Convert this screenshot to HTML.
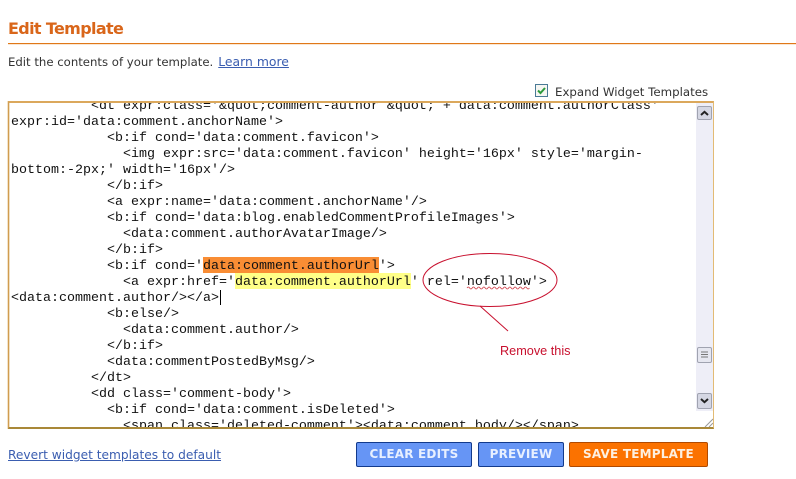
<!DOCTYPE html>
<html><head><meta charset="utf-8">
<style>
html,body{margin:0;padding:0;background:#fff;}
body{width:796px;height:479px;position:relative;overflow:hidden;font-family:"DejaVu Sans","Liberation Sans",sans-serif;}
.abs{position:absolute;white-space:nowrap;}
#ta{position:absolute;left:8px;top:101px;width:704px;height:324px;border-style:solid;border-width:2px 1px 2px 1px;border-color:#dba85c #e3bb74 #a98838 #d09c50;overflow:hidden;background:#fff;box-shadow:1px 0 0 #f0e0c4 inset,-1px 0 0 #f3e3c8;}
.l{position:absolute;left:2px;white-space:pre;font:13.33px/16px "Liberation Mono",monospace;color:#111;height:16px;}
.h{position:absolute;width:176px;height:16px;}
.btn{position:absolute;top:442px;height:23px;border:1px solid #123a8c;border-radius:2px;background:#6695f5;color:#e8f0ff;font:bold 12px/23px "DejaVu Sans",sans-serif;text-align:center;letter-spacing:.2px;}
a{color:#3a5db0;text-decoration:underline;}
</style></head><body>
<div class="abs" style="left:8px;top:19px;font:bold 16px/20px 'DejaVu Sans',sans-serif;color:#d9661a;letter-spacing:-.65px">Edit Template</div>
<div class="abs" style="left:8px;top:43px;width:788px;height:1px;background:#e07818"></div>
<div class="abs" style="left:8px;top:44px;width:788px;height:1px;background:#fae6d2"></div>
<div class="abs" style="left:8px;top:54px;font-size:11.7px;line-height:16px;color:#333">Edit the contents of your template.<a href="#" style="font-size:12.4px;margin-left:5px">Learn more</a></div>
<svg class="abs" style="left:535px;top:84px" width="14" height="14"><rect x=".5" y=".5" width="12" height="12" fill="#f6f6f2" stroke="#4a7a96"/><path d="M3 6.5l2.5 2.5 4.5-5" fill="none" stroke="#2d9a3c" stroke-width="2"/></svg>
<div class="abs" style="left:555px;top:84px;font-size:11.8px;line-height:16px;color:#333">Expand Widget Templates</div>
<div id="ta">
<div class="h" style="left:194px;top:154px;background:#f98d34"></div>
<div class="h" style="left:226px;top:170px;background:#ffff88"></div>
<div class="l" style="top:-4px">          &lt;dt expr:class='&amp;quot;comment-author &amp;quot; + data:comment.authorClass'</div>
<div class="l" style="top:12px">expr:id='data:comment.anchorName'&gt;</div>
<div class="l" style="top:28px">            &lt;b:if cond='data:comment.favicon'&gt;</div>
<div class="l" style="top:44px">              &lt;img expr:src='data:comment.favicon' height='16px' style='margin-</div>
<div class="l" style="top:60px">bottom:-2px;' width='16px'/&gt;</div>
<div class="l" style="top:76px">            &lt;/b:if&gt;</div>
<div class="l" style="top:92px">            &lt;a expr:name='data:comment.anchorName'/&gt;</div>
<div class="l" style="top:108px">            &lt;b:if cond='data:blog.enabledCommentProfileImages'&gt;</div>
<div class="l" style="top:124px">              &lt;data:comment.authorAvatarImage/&gt;</div>
<div class="l" style="top:140px">            &lt;/b:if&gt;</div>
<div class="l" style="top:156px">            &lt;b:if cond='data:comment.authorUrl'&gt;</div>
<div class="l" style="top:172px">              &lt;a expr:href='data:comment.authorUrl' rel='nofollow'&gt;</div>
<div class="l" style="top:188px">&lt;data:comment.author/&gt;&lt;/a&gt;</div>
<div class="l" style="top:204px">            &lt;b:else/&gt;</div>
<div class="l" style="top:220px">              &lt;data:comment.author/&gt;</div>
<div class="l" style="top:236px">            &lt;/b:if&gt;</div>
<div class="l" style="top:252px">            &lt;data:commentPostedByMsg/&gt;</div>
<div class="l" style="top:268px">          &lt;/dt&gt;</div>
<div class="l" style="top:284px">          &lt;dd class='comment-body'&gt;</div>
<div class="l" style="top:300px">            &lt;b:if cond='data:comment.isDeleted'&gt;</div>
<div class="l" style="top:316px">              &lt;span class='deleted-comment'&gt;&lt;data:comment.body/&gt;&lt;/span&gt;</div>
<div style="position:absolute;left:211px;top:187px;width:1px;height:15px;background:#000"></div>
<svg style="position:absolute;left:687px;top:0" width="17" height="324">
<rect x="0" y="0" width="17" height="308" fill="#eeeef7"/>
<rect x="1.5" y="3.5" width="14" height="13" rx="1.5" fill="#d5d7e3" stroke="#a0a3b0"/>
<path d="M5 12l3.5-3.2 3.5 3.2" fill="none" stroke="#222" stroke-width="2"/>
<rect x="1.5" y="244.5" width="14" height="15" rx="1.5" fill="#e6e7f0" stroke="#a0a3b0"/>
<path d="M5 249h7M5 251.5h7M5 254h7" stroke="#777" fill="none"/>
<rect x="1.5" y="290.5" width="14" height="15" rx="1.5" fill="#d5d7e3" stroke="#a0a3b0"/>
<path d="M5 296l3.5 3.2 3.5-3.2" fill="none" stroke="#222" stroke-width="2"/>
<path d="M9 324l8-8M13 324l4-4" stroke="#999" fill="none"/>
</svg>
</div>
<svg class="abs" style="left:0;top:0" width="796" height="479">
<ellipse cx="490" cy="280" rx="67" ry="26.5" fill="none" stroke="#c8102e" stroke-width="1"/>
<path d="M480 306L508 331" stroke="#c8102e" fill="none"/>
<path d="M467 288q1.3-2 2.6 0t2.6 0 2.6 0 2.6 0 2.6 0 2.6 0 2.6 0 2.6 0 2.6 0 2.6 0 2.6 0 2.6 0 2.6 0 2.6 0 2.6 0 2.6 0 2.6 0 2.6 0 2.6 0 2.6 0 2.6 0 2.6 0 2.6 0 2.6 0" stroke="#d0404a" fill="none" stroke-width=".8"/>
</svg>
<div class="abs" style="left:500px;top:344px;font:12.7px/14px 'Liberation Sans',sans-serif;color:#c8102e">Remove this</div>
<div class="abs" style="left:8px;top:447px;font-size:12.2px;line-height:16px"><a href="#">Revert widget templates to default</a></div>
<div class="btn" style="left:356px;width:114px">CLEAR EDITS</div>
<div class="btn" style="left:478px;width:84px">PREVIEW</div>
<div class="btn" style="left:569px;width:137px;background:#fb7200;border-color:#b04a00;color:#fdf0e0">SAVE TEMPLATE</div>
</body></html>
